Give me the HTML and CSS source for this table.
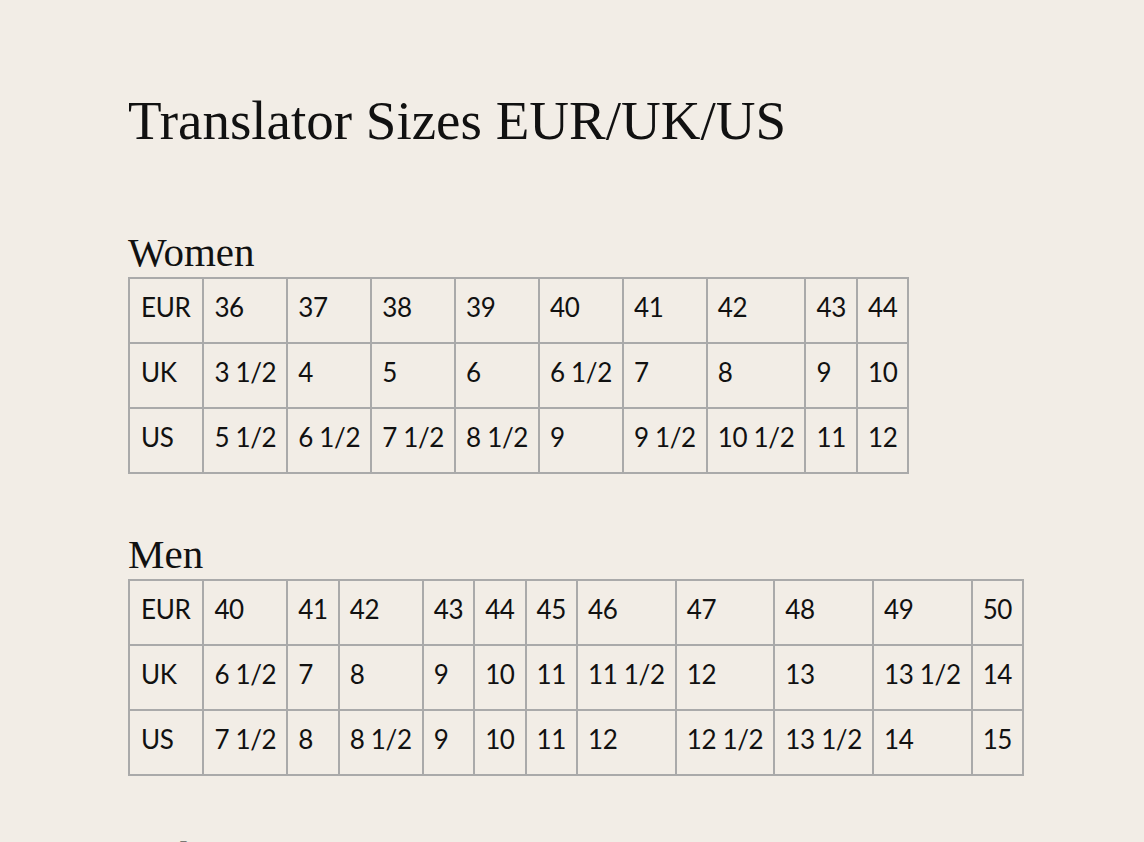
FILE: index.html
```html
<!DOCTYPE html>
<html lang="en">
<head>
<meta charset="utf-8">
<title>Translator Sizes EUR/UK/US</title>
<link rel="stylesheet" href="styles.css">
</head>
<body>
<main class="page">
  <h1 class="title">Translator Sizes EUR/UK/US</h1>

  <section class="size-group">
    <h2 class="group-title">Women</h2>
    <table class="size-table">
      <tr><th scope="row">EUR</th><td>36</td><td>37</td><td>38</td><td>39</td><td>40</td><td>41</td><td>42</td><td>43</td><td>44</td></tr>
      <tr><th scope="row">UK</th><td>3 1/2</td><td>4</td><td>5</td><td>6</td><td>6 1/2</td><td>7</td><td>8</td><td>9</td><td>10</td></tr>
      <tr><th scope="row">US</th><td>5 1/2</td><td>6 1/2</td><td>7 1/2</td><td>8 1/2</td><td>9</td><td>9 1/2</td><td>10 1/2</td><td>11</td><td>12</td></tr>
    </table>
  </section>

  <section class="size-group">
    <h2 class="group-title">Men</h2>
    <table class="size-table">
      <tr><th scope="row">EUR</th><td>40</td><td>41</td><td>42</td><td>43</td><td>44</td><td>45</td><td>46</td><td>47</td><td>48</td><td>49</td><td>50</td></tr>
      <tr><th scope="row">UK</th><td>6 1/2</td><td>7</td><td>8</td><td>9</td><td>10</td><td>11</td><td>11 1/2</td><td>12</td><td>13</td><td>13 1/2</td><td>14</td></tr>
      <tr><th scope="row">US</th><td>7 1/2</td><td>8</td><td>8 1/2</td><td>9</td><td>10</td><td>11</td><td>12</td><td>12 1/2</td><td>13 1/2</td><td>14</td><td>15</td></tr>
    </table>
  </section>

  <section class="size-group">
    <h2 class="group-title">Kids</h2>
  </section>
</main>
</body>
</html>
```

FILE: styles.css
```css
html, body {
  margin: 0;
  padding: 0;
  background: #f2ede6;
}

body {
  color: #111111;
  font-family: "Liberation Serif", "Times New Roman", serif;
}

.page {
  padding: 89px 0 0 128px;
}

.title {
  margin: 0 0 75px;
  font-size: 55px;
  line-height: 64px;
  font-weight: 400;
}

.size-group {
  margin: 0 0 56px;
}

.group-title {
  margin: 0 0 1px;
  font-size: 41px;
  line-height: 48px;
  font-weight: 400;
}

.size-table {
  border-collapse: collapse;
  font-family: Lato, "Noto Sans", sans-serif;
  font-size: 26px;
  line-height: 33px;
  letter-spacing: -0.35px;
  color: #111111;
}

.size-table th,
.size-table td {
  border: 2px solid #aaaaaa;
  padding: 12px 10px 18px;
  white-space: nowrap;
  text-align: left;
  font-weight: 400;
}

.size-table th {
  padding-left: 11px;
  padding-right: 12px;
}
```
